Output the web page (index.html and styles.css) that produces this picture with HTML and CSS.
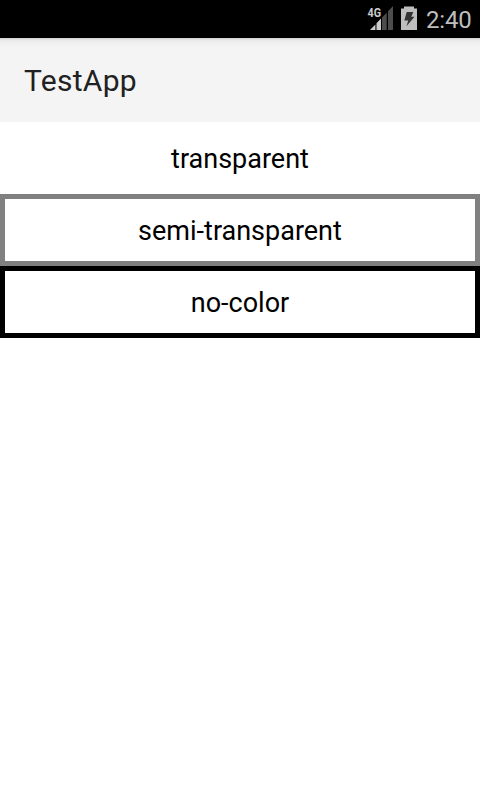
FILE: index.html
```html
<!DOCTYPE html>
<html lang="en">
<head>
<meta charset="utf-8">
<title>TestApp</title>
<link rel="stylesheet" href="styles.css">
</head>
<body>
<div class="status">
  <svg class="signal" width="28" height="34" viewBox="0 -4 28 34">
    <path d="M4 24L9.4 18.4V24ZM10.5 17.3L15 12.6V24H10.5Z" fill="#ccc"/>
    <path d="M16 11.6L20.7 6.7V24H16ZM22 5.3L27 0V24H22Z" fill="#4d4d4d"/>
    <text x="1.5" y="11.3" textLength="13.5" lengthAdjust="spacingAndGlyphs" class="net">4G</text>
  </svg>
  <svg class="battery" width="16" height="26" viewBox="0 0 16 26">
    <path d="M3 .5H13V2.5H16V24H0V2.5H3Z" fill="#bebebe"/>
    <path d="M5.7 6H12.3L10.3 10.7H13.5L5.5 20.3L7.2 14.5H3.3Z" fill="#333"/>
  </svg>
  <span class="clock">2:40</span>
</div>
<header class="bar"><h1 class="title">TestApp</h1></header>
<main class="list">
  <div class="row clear">transparent</div>
  <div class="row semi">semi-transparent</div>
  <div class="row solid">no-color</div>
</main>
</body>
</html>
```
FILE: styles.css
```css
* { box-sizing: border-box; }
body { margin: 0; height: 800px; background: #fff; font-family: Roboto, sans-serif; overflow: hidden; }
.status { height: 38px; background: #000; display: flex; align-items: center; justify-content: flex-end; padding-right: 9px; }
.signal { margin-right: 7px; overflow: visible; }
.battery { margin-right: 9px; }
.net { font: 700 13.5px Roboto, sans-serif; fill: #ccc; stroke: #000; stroke-width: 1px; paint-order: stroke; }
.clock { width: 45px; font-size: 24px; line-height: 38px; letter-spacing: -0.2px; padding-top: 1px; color: #bebebe; }
.bar { height: 84px; background: linear-gradient(#d0d0d0, #e8e8e8 2px, #f0f0f0 5px, #f4f4f4 10px); padding: 1px 0 0 24px; }
.title { margin: 0; font-size: 30px; font-weight: 400; line-height: 83px; letter-spacing: 0.3px; color: #212121; }
.row { height: 72px; border: 5px solid transparent; padding-top: 1px; font-size: 27px; line-height: 62px; text-align: center; color: #000; }
.semi { border-color: #808080; }
.solid { border-color: #000; }
```
